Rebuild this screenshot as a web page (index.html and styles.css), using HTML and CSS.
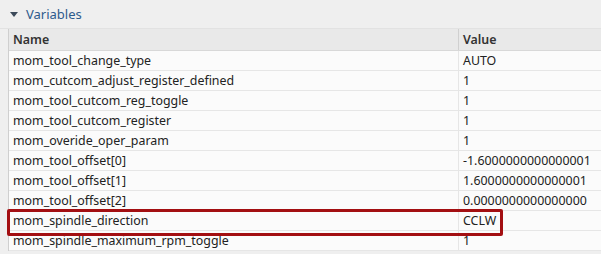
FILE: index.html
```html
<!DOCTYPE html>
<html lang="en">
<head>
  <meta charset="UTF-8" />
  <title>Variables</title>
  <link rel="stylesheet" href="styles.css">
</head>
<body>
  <div class="panel">
    <div class="panel-title">
      <span class="caret"></span>
      <span>Variables</span>
    </div>
    <div class="table-wrap">
      <div class="row head">
        <div class="cell name">Name</div>
        <div class="cell value">Value</div>
      </div>
      <div class="row"><div class="cell name">mom_tool_change_type</div><div class="cell value">AUTO</div></div>
      <div class="row"><div class="cell name">mom_cutcom_adjust_register_defined</div><div class="cell value">1</div></div>
      <div class="row"><div class="cell name">mom_tool_cutcom_reg_toggle</div><div class="cell value">1</div></div>
      <div class="row"><div class="cell name">mom_tool_cutcom_register</div><div class="cell value">1</div></div>
      <div class="row"><div class="cell name">mom_overide_oper_param</div><div class="cell value">1</div></div>
      <div class="row"><div class="cell name">mom_tool_offset[0]</div><div class="cell value">-1.6000000000000001</div></div>
      <div class="row"><div class="cell name">mom_tool_offset[1]</div><div class="cell value">1.6000000000000001</div></div>
      <div class="row"><div class="cell name">mom_tool_offset[2]</div><div class="cell value">0.0000000000000000</div></div>
      <div class="row marked"><div class="cell name">mom_spindle_direction</div><div class="cell value">CCLW</div></div>
      <div class="row"><div class="cell name">mom_spindle_maximum_rpm_toggle</div><div class="cell value">1</div></div>
    </div>
  </div>
</body>
</html>
```

FILE: styles.css
```css
:root {
  --panel-bg: #efefef;
  --head-bg: #e9e9e9;
  --line: #e6e6e6;
  --text: #222;
  --title: #2e5b8c;
  --mark: #a30f12;
  --name-width: 445px;
}
body {
  margin: 0;
  background: var(--panel-bg);
  font-family: "Noto Sans", "Open Sans", sans-serif;
  font-size: 12.4px;
  color: var(--text);
}
.panel {
  width: 601px;
  height: 254px;
  overflow: hidden;
}
.panel-title {
  display: flex;
  align-items: center;
  gap: 8px;
  height: 28px;
  padding-left: 10px;
  color: var(--title);
  font-size: 13px;
  border-bottom: 1px solid #e2e2e2;
}
.caret {
  width: 0;
  height: 0;
  border-left: 4px solid transparent;
  border-right: 4px solid transparent;
  border-top: 5px solid #3c4a5a;
}
.table-wrap {
  margin-left: 8px;
  border-left: 1px solid #cfcfcf;
  background: #fff;
}
.row {
  display: flex;
  height: 19px;
  border-bottom: 1px solid var(--line);
  background: #fbfbfb;
}
.row.head {
  height: 21px;
  background: var(--head-bg);
  border-bottom: 1px solid #d8d8d8;
  font-weight: 600;
  color: #333;
}
.cell {
  display: flex;
  align-items: center;
  padding-left: 4px;
  white-space: nowrap;
}
.cell.name {
  flex: 0 0 var(--name-width);
  border-right: 1px solid var(--line);
}
.row.head .cell.name {
  border-right: 1px solid #d0d0d0;
}
.cell.value {
  flex: 1;
}
.row.marked {
  position: relative;
}
.row.marked::after {
  content: "";
  position: absolute;
  left: -2px;
  top: -2px;
  width: 490px;
  height: 21px;
  border: 3px solid var(--mark);
  border-radius: 2px;
}
```
